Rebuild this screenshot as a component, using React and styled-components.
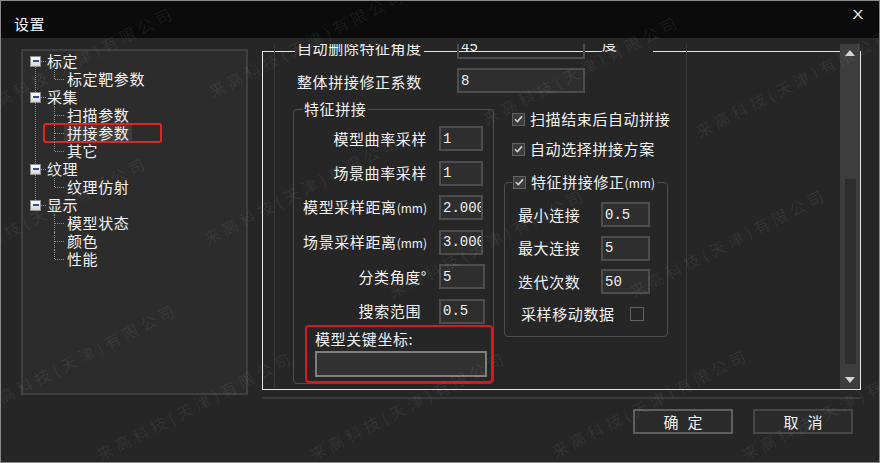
import React from "react";
import styled, { createGlobalStyle } from "styled-components";

const CJK = `"Noto Sans CJK SC", "Noto Sans", sans-serif`;
const MONO = `"Liberation Mono", "DejaVu Sans Mono", monospace`;

const GlobalStyle = createGlobalStyle`
  html, body {
    margin: 0;
    padding: 0;
    background: #262626;
  }
  * {
    box-sizing: border-box;
  }
`;

const Window = styled.div`
  position: relative;
  width: 880px;
  height: 463px;
  border: 1px solid #8a8a8a;
  background: #262626;
  display: flex;
  flex-direction: column;
  overflow: hidden;
  font-family: ${CJK};
  color: #f2f2f2;
`;

const TitleBar = styled.div`
  flex: none;
  height: 37px;
  background: #0b0b0b;
  display: flex;
  justify-content: space-between;
  align-items: flex-start;
  padding: 0 17px 0 13px;
`;

const Title = styled.div`
  margin-top: 14px;
  font-size: 15px;
  line-height: 18px;
  letter-spacing: 0.5px;
`;

const Close = styled.div`
  margin-top: 8px;
  font-family: "Liberation Sans", Arial, sans-serif;
  font-size: 12px;
  line-height: 12px;
  transform: scaleX(1.35);
`;

const Body = styled.div`
  flex: 1;
  display: flex;
  align-items: flex-start;
  padding: 0 18px 0 20px;
`;

/* ---------- tree ---------- */

const TreePanel = styled.div`
  width: 227px;
  height: 346px;
  margin-top: 11px;
  border: 2px solid #3f3f3f;
  background: #2c2c2c;
  padding-top: 1px;
`;

const Group = styled.div`
  position: relative;
  &:not(:last-child)::before {
    content: "";
    position: absolute;
    left: 12px;
    top: 14px;
    bottom: -4px;
    border-left: 1px dotted #8c8c8c;
  }
`;

const GroupHeader = styled.div`
  height: 18px;
  display: flex;
  align-items: center;
  padding-left: 7px;
`;

const ExpandBox = styled.span`
  position: relative;
  z-index: 1;
  flex: none;
  width: 11px;
  height: 11px;
  border: 1px solid #8d8d8d;
  background: linear-gradient(#ffffff, #d6d6d6);
  display: flex;
  align-items: center;
  justify-content: center;
`;

const Minus = styled.span`
  width: 6px;
  height: 2px;
  background: #2d4f96;
`;

const HDots = styled.span`
  width: 5px;
  border-top: 1px dotted #8c8c8c;
  margin-right: 1px;
`;

const NodeLabel = styled.span`
  font-size: 15px;
  line-height: 16px;
  letter-spacing: 0.6px;
  padding: ${(p) => (p.$child ? "0 3px" : "0")};
  background: ${(p) => (p.$selected ? "#3c3c3c" : "transparent")};
  white-space: nowrap;
`;

const ChildRow = styled.div`
  position: relative;
  height: 18px;
  display: flex;
  align-items: center;
  padding-left: 41px;
  &::before {
    content: "";
    position: absolute;
    left: 31px;
    top: 0;
    height: ${(p) => (p.$last ? "9px" : "18px")};
    border-left: 1px dotted #8c8c8c;
  }
  &::after {
    content: "";
    position: absolute;
    left: 32px;
    top: 9px;
    width: 9px;
    border-top: 1px dotted #8c8c8c;
  }
`;

const RedMark = styled.span`
  position: absolute;
  left: 20px;
  top: -1px;
  width: 119px;
  height: 20px;
  border: 2px solid #e02424;
  border-radius: 3px;
`;

/* ---------- right side ---------- */

const RightSection = styled.div`
  width: 599px;
  margin: 6px 0 0 14px;
  display: flex;
  flex-direction: column;
`;

const Viewport = styled.div`
  position: relative;
  height: 346px;
  overflow: hidden;
`;

const Frame = styled.div`
  margin-top: 7px;
  height: 339px;
  border: 1px solid #e6e6e6;
`;

const Content = styled.div`
  margin: -17px 0 0 11px;
  width: 413px;
  height: 352px;
  border-left: 1px solid #383838;
  border-right: 1px solid #383838;
`;

const FormRow = styled.div`
  display: flex;
  align-items: ${(p) => (p.$top ? "flex-start" : "center")};
  height: ${(p) => p.$h}px;
  margin: ${(p) => p.$mt}px 0 0 22px;
`;

const LabelCell = styled.div`
  width: 160px;
  flex: none;
`;

const Text = styled.span`
  font-size: 15px;
  line-height: 18px;
  letter-spacing: 0.6px;
  white-space: nowrap;
`;

const Plate = styled(Text)`
  display: inline-block;
  background: #262626;
  padding: 0 2px;
  margin-left: -2px;
`;

const UnitPlate = styled(Text)`
  width: 51px;
  margin-left: 17px;
  background: #262626;
`;

const Small = styled.span`
  font-size: 12px;
  letter-spacing: 0;
`;

const Field = styled.div`
  flex: none;
  width: ${(p) => p.$w}px;
  height: ${(p) => p.$h || 25}px;
  border: 2px solid ${(p) => (p.$light ? "#7e7e7e" : "#4d4d4d")};
  background: ${(p) => (p.$ghost ? "transparent" : p.$light ? "#323232" : "#2e2e2e")};
  padding: 0 2px;
  display: flex;
  align-items: center;
  overflow: hidden;
  white-space: nowrap;
  font-family: ${MONO};
  font-size: 14px;
  color: #f0f0f0;
`;

const Lower = styled.div`
  display: flex;
  align-items: flex-start;
  margin: 7px 0 0 18px;
`;

const GroupBox = styled.fieldset`
  margin: 0;
  min-width: 0;
  width: ${(p) => p.$w}px;
  padding: ${(p) => p.$pad};
  border: 1px solid #4e4e4e;
  border-radius: 4px;
`;

const GroupTitle = styled.legend`
  margin-left: ${(p) => p.$ml}px;
  padding: 0 2px 0 1px;
  font-size: 15px;
  line-height: 18px;
  letter-spacing: 0.6px;
`;

const FieldGrid = styled.div`
  display: grid;
  grid-template-columns: ${(p) => p.$cols};
  grid-auto-rows: 25px;
  column-gap: ${(p) => p.$cg}px;
  row-gap: ${(p) => p.$rg}px;
  align-items: center;
  margin-left: ${(p) => p.$ml || 0}px;
`;

const GridLabel = styled(Text)`
  text-align: ${(p) => (p.$right ? "right" : "left")};
  padding-right: ${(p) => p.$pr || 0}px;
`;

const KeyBox = styled.div`
  width: 188px;
  height: 58px;
  margin: 1px 0 0 11px;
  border: 2px solid #e5141b;
  border-radius: 4px;
  padding: 3px 0 0 8px;
`;

const KeyLabel = styled(Text)`
  display: block;
  margin-bottom: 3px;
`;

const SideColumn = styled.div`
  width: 165px;
  margin-left: 10px;
  padding-top: 10px;
  display: flex;
  flex-direction: column;
`;

const CheckLine = styled.div`
  height: 18px;
  display: flex;
  align-items: center;
  gap: 5px;
  padding-left: ${(p) => p.$pl || 0}px;
  margin-bottom: ${(p) => p.$mb || 0}px;
`;

const Box = styled.span`
  flex: none;
  width: ${(p) => p.$s}px;
  height: ${(p) => p.$s}px;
  border: 1px solid #626262;
  background: ${(p) => (p.$on ? "#3b3b3b" : "transparent")};
  display: flex;
  align-items: center;
  justify-content: center;
`;

const SideBox = styled(GroupBox)`
  margin-top: 15px;
`;

const MoveRow = styled.div`
  display: flex;
  align-items: center;
  height: 18px;
  margin: 11px 0 0 16px;
`;

const MoveLabel = styled(Text)`
  width: 109px;
`;

const ScrollBar = styled.div`
  position: absolute;
  top: 0;
  right: 1px;
  bottom: 1px;
  width: 20px;
  background: #3d3d3d;
  display: flex;
  flex-direction: column;
  align-items: center;
`;

const Arrow = styled.div`
  flex: none;
  height: 18px;
  display: flex;
  align-items: center;
  justify-content: center;
`;

const Track = styled.div`
  flex: 1;
  width: 11px;
`;

const Thumb = styled.div`
  margin-top: 117px;
  height: 185px;
  background: #2d2d2d;
`;

const Divider = styled.div`
  height: 2px;
  margin-top: 7px;
  background: #3a3a3a;
`;

const ButtonBar = styled.div`
  display: flex;
  justify-content: flex-end;
  gap: 20px;
  margin-top: 10px;
  padding-right: 8px;
`;

const Button = styled.button`
  width: 100px;
  height: 25px;
  padding: 0;
  border: 2px solid ${(p) => (p.$primary ? "#5e5e5e" : "#474747")};
  background: #2b2b2b;
  color: #f2f2f2;
  font-family: ${CJK};
  font-size: 15px;
  line-height: 21px;
  letter-spacing: 9px;
  text-indent: 9px;
  text-align: center;
`;

/* ---------- watermark ---------- */

const Watermark = styled.div`
  position: absolute;
  inset: 0;
  pointer-events: none;
  overflow: hidden;
  z-index: 10;
`;

const Mark = styled.span`
  position: absolute;
  left: ${(p) => p.$x}px;
  top: ${(p) => p.$y - 20}px;
  transform: rotate(-27deg);
  transform-origin: 0 100%;
  white-space: nowrap;
  font-family: ${CJK};
  font-size: 16px;
  line-height: 20px;
  letter-spacing: 4px;
  color: rgba(255, 255, 255, 0.07);
`;

const tree = [
  { label: "标定", children: ["标定靶参数"] },
  { label: "采集", children: ["扫描参数", "拼接参数", "其它"] },
  { label: "纹理", children: ["纹理仿射"] },
  { label: "显示", children: ["模型状态", "颜色", "性能"] },
];
const selected = "拼接参数";

const mm = <Small>(mm)</Small>;

const featureRows = [
  { label: "模型曲率采样", value: "1" },
  { label: "场景曲率采样", value: "1" },
  { label: <>模型采样距离{mm}</>, value: "2.000" },
  { label: <>场景采样距离{mm}</>, value: "3.000" },
  { label: "分类角度°", value: "5", w: 46 },
  { label: "搜索范围", value: "0.5", w: 46, pr: 6 },
];

const linkRows = [
  { label: "最小连接", value: "0.5" },
  { label: "最大连接", value: "5" },
  { label: "迭代次数", value: "50" },
];

const marks = [
  [-18, 118], [213, 100], [487, 127], [700, 140],
  [-45, 268], [208, 247], [393, 300], [634, 300],
  [-15, 415], [101, 463], [314, 463], [556, 460], [746, 463],
];

const Check = ({ on, size = 13 }) => (
  <Box $on={on} $s={size}>
    {on && (
      <svg width="9" height="8" viewBox="0 0 9 8">
        <path d="M1 4.2 L3.4 6.6 L8 1.4" stroke="#d2d2d2" strokeWidth="1.6" fill="none" />
      </svg>
    )}
  </Box>
);

const Triangle = ({ down }) => (
  <svg width="10" height="6" viewBox="0 0 10 6">
    <path d={down ? "M0 0 L10 0 L5 6 Z" : "M0 6 L5 0 L10 6 Z"} fill="#d4d4d4" />
  </svg>
);

export default function App() {
  return (
    <>
      <GlobalStyle />
      <Window>
        <TitleBar>
          <Title>设置</Title>
          <Close>X</Close>
        </TitleBar>
        <Body>
          <TreePanel>
            {tree.map((g) => (
              <Group key={g.label}>
                <GroupHeader>
                  <ExpandBox>
                    <Minus />
                  </ExpandBox>
                  <HDots />
                  <NodeLabel>{g.label}</NodeLabel>
                </GroupHeader>
                {g.children.map((c, i) => (
                  <ChildRow key={c} $last={i === g.children.length - 1}>
                    <NodeLabel $child $selected={c === selected}>
                      {c}
                    </NodeLabel>
                    {c === selected && <RedMark />}
                  </ChildRow>
                ))}
              </Group>
            ))}
          </TreePanel>

          <RightSection>
            <Viewport>
              <Frame>
                <Content>
                  <FormRow $h={24} $mt={0} $top>
                    <LabelCell>
                      <Plate>自动删除特征角度</Plate>
                    </LabelCell>
                    <Field $w={128} $h={24} $ghost>
                      45
                    </Field>
                    <UnitPlate>度</UnitPlate>
                  </FormRow>
                  <FormRow $h={25} $mt={9}>
                    <LabelCell>
                      <Text>整体拼接修正系数</Text>
                    </LabelCell>
                    <Field $w={128}>8</Field>
                  </FormRow>

                  <Lower>
                    <GroupBox $w={201} $pad="8px 0 0 0">
                      <GroupTitle $ml={9}>特征拼接</GroupTitle>
                      <FieldGrid $cols="133px auto" $cg={12} $rg={9.5}>
                        {featureRows.map((r, i) => (
                          <React.Fragment key={i}>
                            <GridLabel $right $pr={r.pr}>
                              {r.label}
                            </GridLabel>
                            <Field $w={r.w || 44}>{r.value}</Field>
                          </React.Fragment>
                        ))}
                      </FieldGrid>
                      <KeyBox>
                        <KeyLabel>模型关键坐标:</KeyLabel>
                        <Field $w={172} $h={26} $light />
                      </KeyBox>
                    </GroupBox>

                    <SideColumn>
                      <CheckLine $pl={8} $mb={12}>
                        <Check on />
                        <Text>扫描结束后自动拼接</Text>
                      </CheckLine>
                      <CheckLine $pl={8}>
                        <Check on />
                        <Text>自动选择拼接方案</Text>
                      </CheckLine>
                      <SideBox $w={164} $pad="11px 0 13px 0">
                        <GroupTitle $ml={7}>
                          <CheckLine>
                            <Check on />
                            <Text>特征拼接修正{mm}</Text>
                          </CheckLine>
                        </GroupTitle>
                        <FieldGrid $cols="83px 49px" $cg={0} $rg={8.5} $ml={13}>
                          {linkRows.map((r) => (
                            <React.Fragment key={r.label}>
                              <GridLabel>{r.label}</GridLabel>
                              <Field $w={49}>{r.value}</Field>
                            </React.Fragment>
                          ))}
                        </FieldGrid>
                        <MoveRow>
                          <MoveLabel>采样移动数据</MoveLabel>
                          <Check size={14} />
                        </MoveRow>
                      </SideBox>
                    </SideColumn>
                  </Lower>
                </Content>
              </Frame>
              <ScrollBar>
                <Arrow>
                  <Triangle />
                </Arrow>
                <Track>
                  <Thumb />
                </Track>
                <Arrow>
                  <Triangle down />
                </Arrow>
              </ScrollBar>
            </Viewport>
            <Divider />
            <ButtonBar>
              <Button $primary>确定</Button>
              <Button>取消</Button>
            </ButtonBar>
          </RightSection>
        </Body>

        <Watermark>
          {marks.map(([x, y]) => (
            <Mark key={`${x}-${y}`} $x={x} $y={y}>
              来高科技(天津)有限公司
            </Mark>
          ))}
        </Watermark>
      </Window>
    </>
  );
}
